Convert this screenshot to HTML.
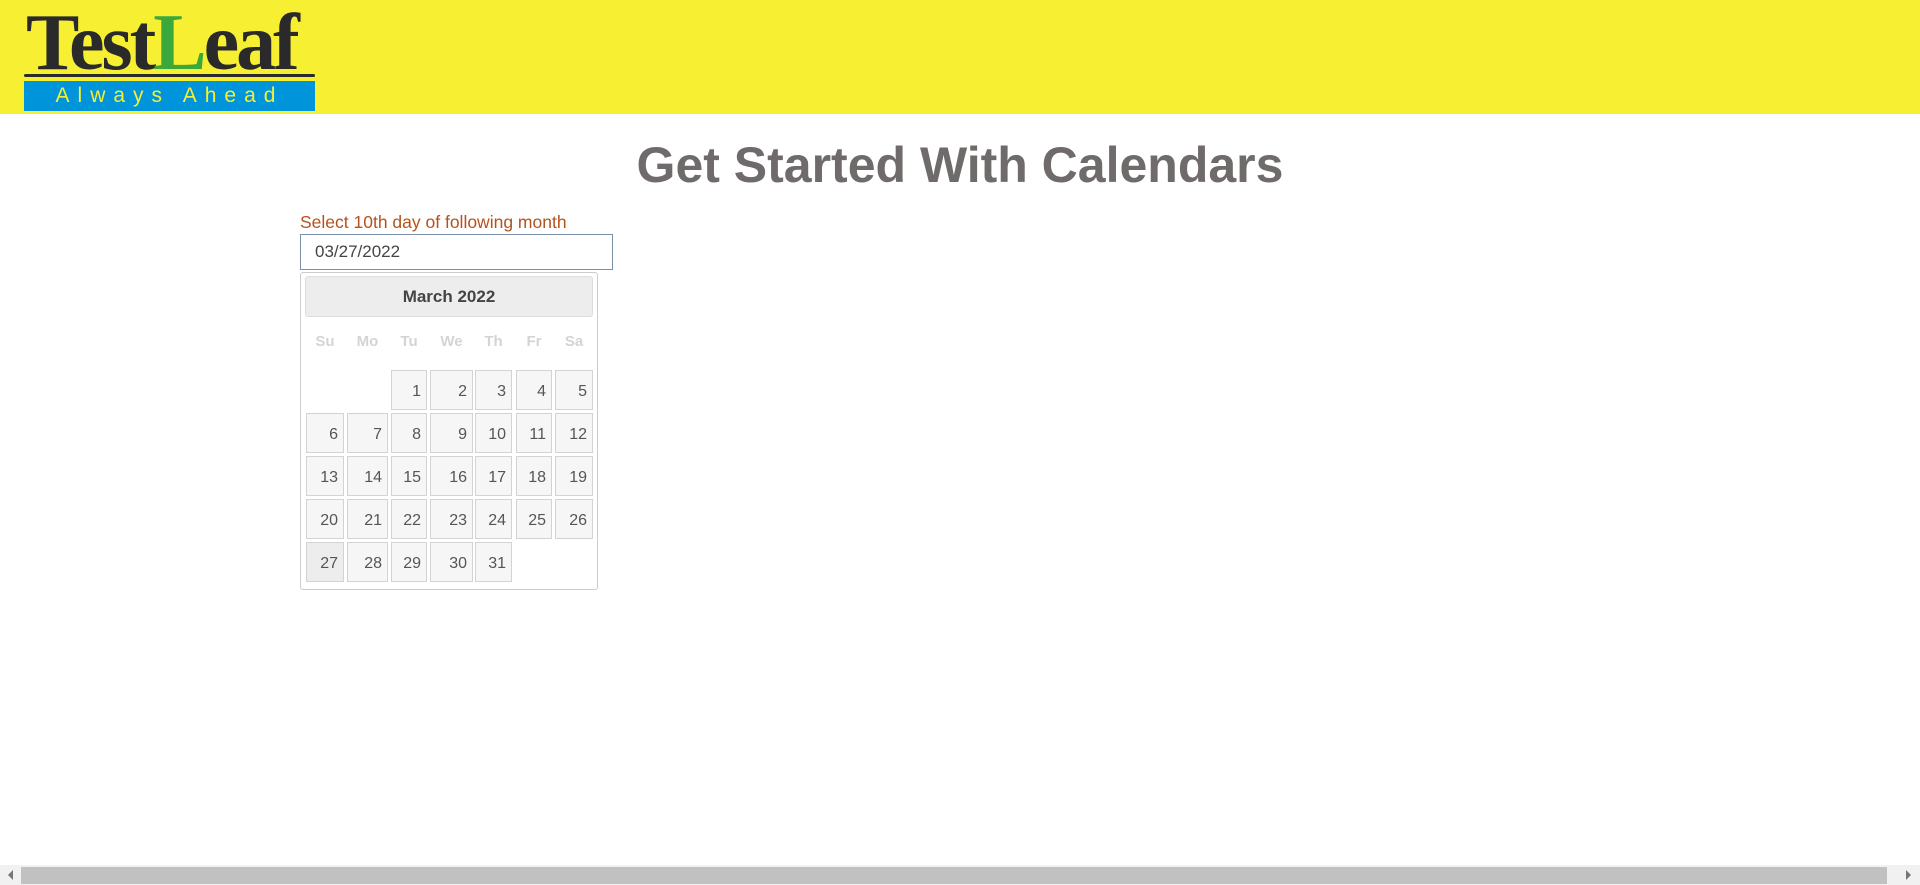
<!DOCTYPE html>
<html><head><meta charset="utf-8"><style>
*{box-sizing:border-box}
body{margin:0;width:1920px;height:885px;overflow:hidden;background:#fff;font-family:"Liberation Sans",Arial,sans-serif;position:relative}
.hdr{position:absolute;left:0;top:0;width:1920px;height:114px;background:#f7ef31}
.logo{position:absolute;left:24px;top:4px;width:291px;height:107px}
.logo .t{position:absolute;left:2px;top:-4px;font-family:"Liberation Serif",serif;font-weight:bold;font-size:80px;color:#2a2a2a;letter-spacing:-3px;line-height:86px}
.logo .bar{position:absolute;left:0;top:77px;width:291px;height:30px;background:#0095da;color:#f7ef31;font-size:21px;letter-spacing:8px;text-align:center;line-height:30px}
.logo .ul{position:absolute;left:0;top:70px;width:291px;height:3px;background:#2a2a2a;border-radius:2px}
h1{position:absolute;left:0;top:135px;width:1920px;margin:0;text-align:center;font-size:50px;font-weight:bold;color:#706b6b;line-height:60px}
.lbl{position:absolute;left:300px;top:212px;font-size:17.5px;color:#b5521c}
.inp{position:absolute;left:300px;top:234px;width:313px;height:36px;border:1px solid #7a8fa9;font-size:17px;color:#444;padding:7px 0 0 14px}
.cal{position:absolute;left:300px;top:272px;width:298px;height:318px;border:1px solid #ccc;border-radius:3px;background:#fff}
.ch{position:absolute;left:4px;top:3px;width:288px;height:41px;background:#ededed;border:1px solid #ddd;border-radius:3px;text-align:center;font-weight:bold;font-size:17px;color:#444;line-height:40px}
.dn{position:absolute;top:60px;font-weight:bold;font-size:15px;color:#d4d4d4}
.c{position:absolute;height:40px;background:#f6f6f6;border:1px solid #d3d3d3;color:#555;font-size:16px;text-align:right;padding:12px 5px 0 0}
.sb{position:absolute;left:0;top:865px;width:1920px;height:20px;background:#f1f1f1}
.th{position:absolute;left:21px;top:867px;width:1866px;height:17px;background:#c1c1c1}
</style></head><body>
<div class="hdr"><div class="logo">
<div class="t">Test<span style="color:#3aa83a">L</span>eaf</div>
<div class="ul"></div>
<div class="bar">Always Ahead</div>
</div></div>
<h1>Get Started With Calendars</h1>
<div class="lbl">Select 10th day of following month</div>
<div class="inp">03/27/2022</div>
<div class="cal"><div class="ch">March 2022</div></div>
<div id="g"></div>
<div class="sb"></div><div class="th"></div>
<div style="position:absolute;left:8px;top:870px;width:0;height:0;border-top:5px solid transparent;border-bottom:5px solid transparent;border-right:5px solid #777"></div>
<div style="position:absolute;left:1906px;top:870px;width:0;height:0;border-top:5px solid transparent;border-bottom:5px solid transparent;border-left:5px solid #777"></div>
<script>
var xs=[306,347,391,430,475,516,555],xe=[344,388,427,473,512,552,593];
var names=["Su","Mo","Tu","We","Th","Fr","Sa"],h="";
for(var i=0;i<7;i++){h+='<div class="dn" style="left:'+xs[i]+'px;width:'+(xe[i]-xs[i])+'px;text-align:center;top:333px">'+names[i]+'</div>';}
for(var r=0;r<5;r++)for(var c=0;c<7;c++){
 var idx=r*7+c-2; if(idx<0)continue; var n=idx+1; if(n>31)continue;
 var y=370+r*43;
 h+='<div class="c" style="left:'+xs[c]+'px;top:'+y+'px;width:'+(xe[c]-xs[c])+'px;'+(n==27?'background:#ededed;':'')+'">'+n+'</div>';
}
document.getElementById('g').innerHTML=h;
</script>
</body></html>
